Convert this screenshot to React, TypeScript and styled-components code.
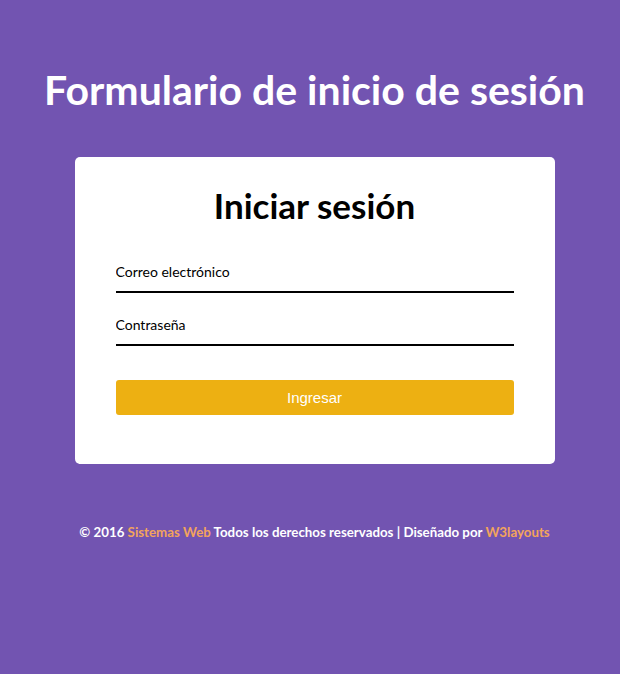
import React from "react";
import styled, { createGlobalStyle } from "styled-components";

const GlobalStyle = createGlobalStyle`
  body {
    margin: 0;
    background: #7254b1;
    font-family: Lato, "Noto Sans", sans-serif;
  }
`;

const Page = styled.div`
  min-height: 674px;
  padding: 62px 0 0 9px;
  box-sizing: border-box;
`;

const Title = styled.h1`
  margin: 0 0 40px;
  text-align: center;
  color: #fff;
  font-size: 41px;
  font-weight: 700;
  line-height: 55px;
`;

const Card = styled.div`
  width: 480px;
  margin: 0 auto;
  background: #fff;
  border-radius: 5px;
  padding: 26px 41px 49px;
  box-sizing: border-box;
`;

const CardTitle = styled.h2`
  margin: 0 0 29px;
  text-align: center;
  color: #000;
  font-size: 35px;
  font-weight: 700;
  line-height: 44px;
`;

const Field = styled.div`
  border-bottom: 2px solid #000;
  padding: 6px 0 9px;
  margin-bottom: 16px;
`;

const Input = styled.input`
  display: block;
  width: 100%;
  border: none;
  outline: none;
  padding: 0;
  font-family: inherit;
  font-size: 14px;
  line-height: 20px;
  color: #000;
  background: transparent;
  &::placeholder {
    color: #000;
  }
`;

const Submit = styled.button`
  display: block;
  width: 100%;
  height: 35px;
  margin-top: 34px;
  border: none;
  border-radius: 3px;
  background: #edb012;
  color: #fff;
  font-family: "Liberation Sans", Arial, sans-serif;
  font-size: 15px;
  cursor: pointer;
`;

const Footer = styled.p`
  margin: 60px 0 0;
  text-align: center;
  color: #fff;
  font-size: 13.3px;
  font-weight: 700;
`;

const Link = styled.a`
  color: #f2a45c;
  text-decoration: none;
`;

export default function App() {
  return (
    <Page>
      <GlobalStyle />
      <Title>Formulario de inicio de sesión</Title>
      <Card>
        <CardTitle>Iniciar sesión</CardTitle>
        <Field>
          <Input type="email" placeholder="Correo electrónico" />
        </Field>
        <Field>
          <Input type="password" placeholder="Contraseña" />
        </Field>
        <Submit>Ingresar</Submit>
      </Card>
      <Footer>
        © 2016 <Link href="#">Sistemas Web</Link> Todos los derechos
        reservados | Diseñado por <Link href="#">W3layouts</Link>
      </Footer>
    </Page>
  );
}
